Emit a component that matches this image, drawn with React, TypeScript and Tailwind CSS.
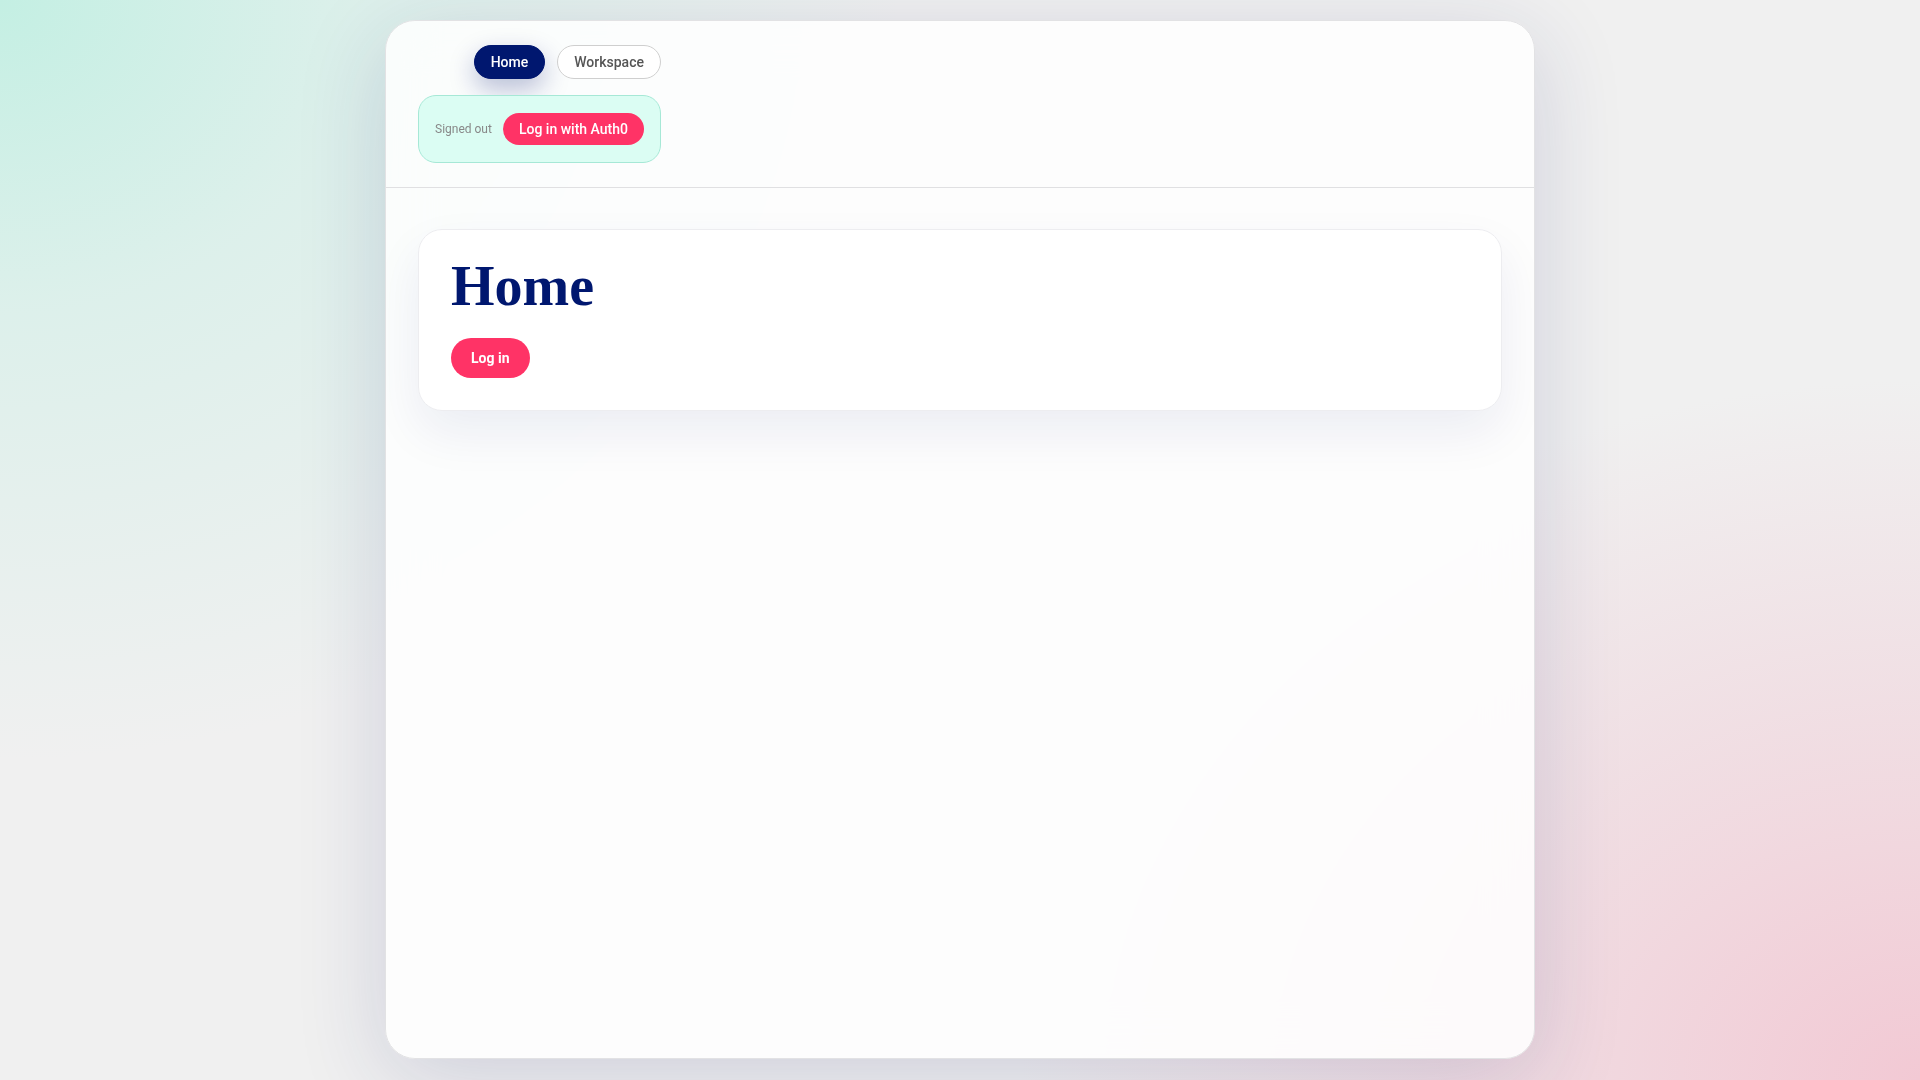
import React from "react";

export default function App() {
  return (
    <div
      className="min-h-screen w-full py-5 bg-[#f0f0f0] bg-[radial-gradient(ellipse_900px_760px_at_0%_0%,#c4efe3_0%,rgba(214,240,233,0.75)_40%,rgba(240,240,240,0)_100%),radial-gradient(ellipse_900px_700px_at_100%_100%,#f2c9d4_0%,rgba(241,212,220,0.8)_40%,rgba(240,240,240,0)_100%)]"
      style={{ fontFamily: "Roboto, 'Liberation Sans', sans-serif" }}
    >
      <div className="mx-auto flex w-[1150px] min-h-[1039px] flex-col overflow-hidden rounded-[30px] border border-[#e2e2e4] bg-white/85 backdrop-blur-xl shadow-[0_20px_90px_rgba(30,40,110,0.16)]">
        <header className="border-b border-[#e0e0e2] px-8 py-6">
          <div className="flex w-fit flex-col items-end gap-4">
            <nav className="flex items-center gap-3">
              <button className="flex h-[34px] items-center rounded-full border border-[#00176f] bg-[#00176f] px-4 text-sm font-medium text-white shadow-[0_10px_26px_rgba(0,23,111,0.28)]">
                Home
              </button>
              <button className="flex h-[34px] items-center rounded-full border border-[#cfcfcf] bg-white px-4 text-sm font-medium text-[#555555]">
                Workspace
              </button>
            </nav>
            <div className="flex items-center gap-[11px] rounded-[18px] border border-[#a6e8d6] bg-[#dbfdf3] px-4 py-[17px]">
              <span className="text-xs text-[#888888]">Signed out</span>
              <button className="flex h-8 items-center rounded-full bg-[#ff3366] px-4 text-sm font-medium text-white">
                Log in with Auth0
              </button>
            </div>
          </div>
        </header>
        <main className="flex-1 px-8 pt-[41px]">
          <section className="rounded-[24px] border border-[#ededf0] bg-white p-8 shadow-[0_22px_50px_rgba(0,26,114,0.07)]">
            <h1
              className="mb-[28px] text-[56px] font-bold leading-[48px] text-[#00176f]"
              style={{ fontFamily: "'Liberation Serif', 'Times New Roman', serif" }}
            >
              Home
            </h1>
            <button className="flex h-10 items-center rounded-full bg-[#ff3366] px-5 text-sm font-bold text-white">
              Log in
            </button>
          </section>
        </main>
      </div>
    </div>
  );
}
